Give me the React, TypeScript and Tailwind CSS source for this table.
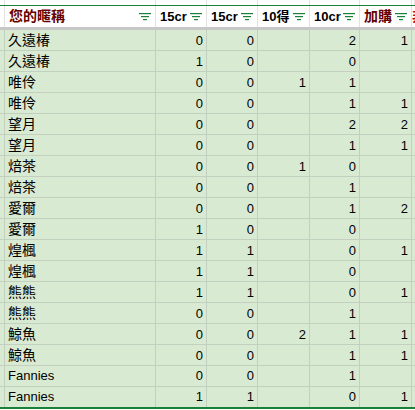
const rows: [string, string, string, string, string, string][] = [
  ['久遠椿', '0', '0', '', '2', '1'],
  ['久遠椿', '1', '0', '', '0', ''],
  ['唯伶', '0', '0', '1', '1', ''],
  ['唯伶', '0', '0', '', '1', '1'],
  ['望月', '0', '0', '', '2', '2'],
  ['望月', '0', '0', '', '1', '1'],
  ['焙茶', '0', '0', '1', '0', ''],
  ['焙茶', '0', '0', '', '1', ''],
  ['愛爾', '0', '0', '', '1', '2'],
  ['愛爾', '1', '0', '', '0', ''],
  ['煌楓', '1', '1', '', '0', '1'],
  ['煌楓', '1', '1', '', '0', ''],
  ['熊熊', '1', '1', '', '0', '1'],
  ['熊熊', '0', '0', '', '1', ''],
  ['鯨魚', '0', '0', '2', '1', '1'],
  ['鯨魚', '0', '0', '', '1', '1'],
  ['Fannies', '0', '0', '', '1', ''],
  ['Fannies', '1', '1', '', '0', '1'],
]

const cols = 'grid grid-cols-[5px_151px_51px_51px_52px_50px_52px_3px]'

function FilterIcon() {
  return (
    <svg width="12" height="8" viewBox="0 0 12 8" className="shrink-0">
      <rect x="0" y="0" width="12" height="1.2" fill="#188038" />
      <rect x="2" y="3" width="8" height="1.2" fill="#188038" />
      <rect x="4" y="6" width="4" height="1.2" fill="#188038" />
    </svg>
  )
}

function HeadCell({ label, red, cjk }: { label: string; red?: boolean; cjk?: boolean }) {
  return (
    <div className="flex items-center justify-between border-r border-[#e2e2e2] pl-[4px] pr-[4px] overflow-hidden">
      <span
        className={`font-bold ${cjk ? 'text-[14px]' : 'text-[13px]'} ${red ? 'text-[#660000]' : 'text-black'}`}
      >
        {label}
      </span>
      <FilterIcon />
    </div>
  )
}

export default function App() {
  return (
    <div
      className="w-[415px] h-[410px] bg-white overflow-hidden"
      style={{ fontFamily: '"Liberation Sans", Arial, "Noto Sans CJK TC", sans-serif' }}
    >
      {/* strip of row above */}
      <div className={`${cols} h-[5px]`}>
        {Array.from({ length: 8 }).map((_, i) => (
          <div key={i} className="border-r border-[#e2e2e2]" />
        ))}
      </div>

      {/* header */}
      <div className={`${cols} h-[22px] border-t border-[#188038]`}>
        <div className="border-r border-[#e2e2e2]" />
        <HeadCell label="您的暱稱" red cjk />
        <HeadCell label="15cr" />
        <HeadCell label="15cr" />
        <HeadCell label="10得" />
        <HeadCell label="10cr" />
        <HeadCell label="加購" red cjk />
        <div className="overflow-hidden flex items-center">
          <span className="font-bold text-[14px] text-[#cc0000]">非</span>
        </div>
      </div>

      <div className="h-[3px] bg-[#c7c7c7]" />

      {rows.map((r, i) => (
        <div
          key={i}
          className={`${cols} h-[21px] bg-[#d9ead3] border-b text-[13px] text-black ${
            i === rows.length - 1 ? 'border-[#188038] border-b-2 h-[22px]' : 'border-[#c3cfbf]'
          }`}
        >
          <div className="border-r border-[#c3cfbf]" />
          <div
            className={`flex items-center pl-[3px] border-r border-[#c3cfbf] ${
              r[0] === 'Fannies' ? '' : 'text-[14px]'
            }`}
          >
            {r[0]}
          </div>
          {r.slice(1).map((v, j) => (
            <div key={j} className="flex items-center justify-end pr-[3px] border-r border-[#c3cfbf]">
              {v}
            </div>
          ))}
          <div />
        </div>
      ))}
    </div>
  )
}
